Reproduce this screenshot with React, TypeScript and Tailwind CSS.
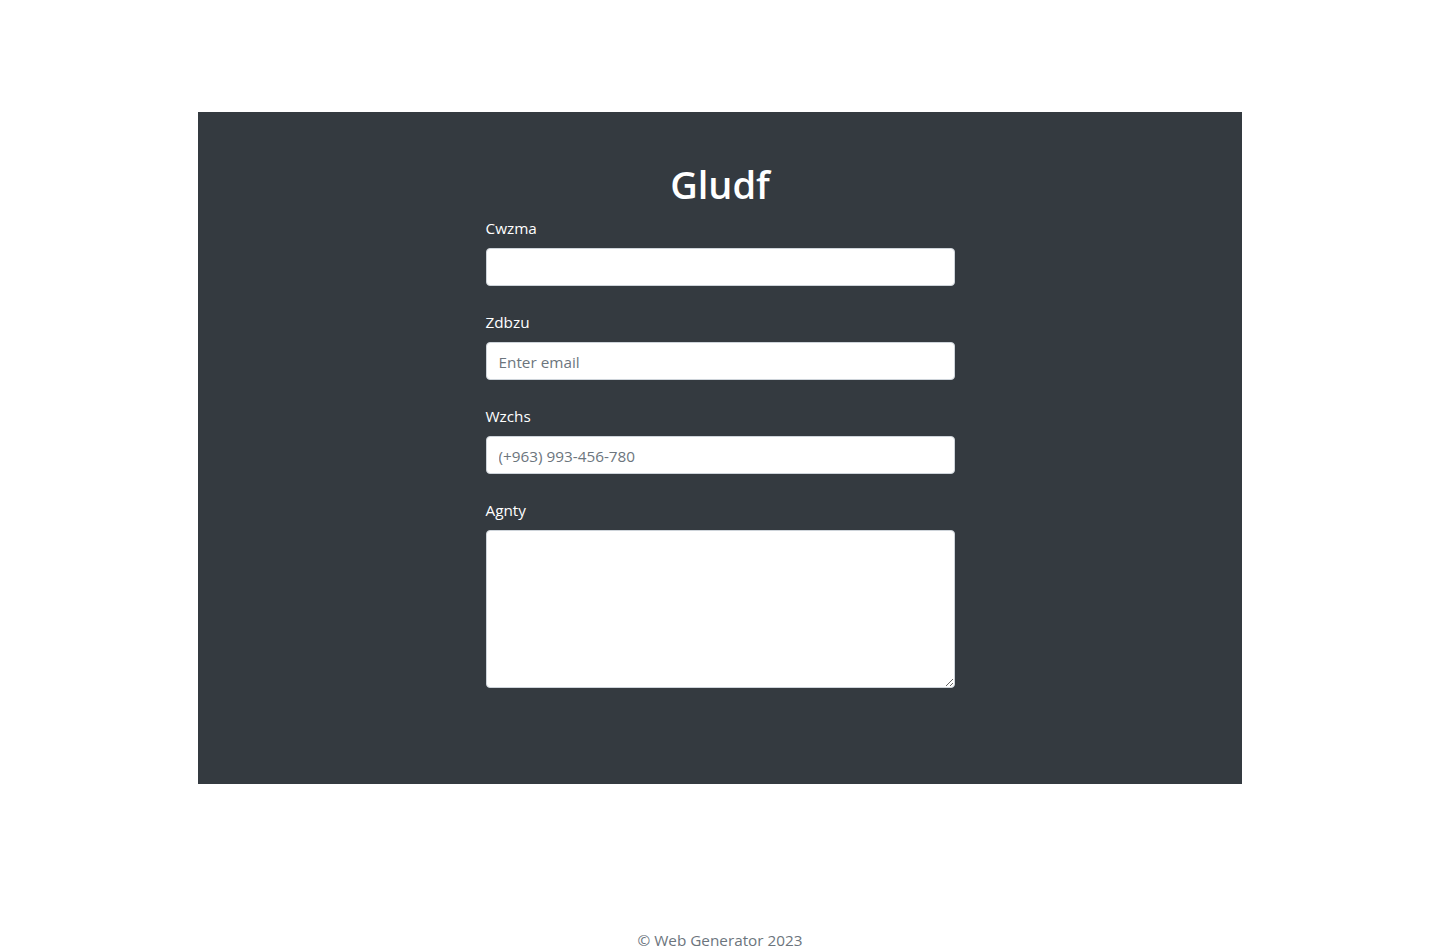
import React from 'react';

function Field({ label, children }: { label: string; children: React.ReactNode }) {
  return (
    <div className="mb-6 flex flex-col">
      <label className="mb-2 text-[15.3px] leading-6 text-white">{label}</label>
      {children}
    </div>
  );
}

const inputCls =
  'h-[38px] w-full rounded-[4px] border border-[#ced4da] bg-white px-3 pt-px text-[15.3px] text-[#212529] placeholder:text-[#6c757d] outline-none';

export default function App() {
  return (
    <div className="flex min-h-[952px] flex-col items-center bg-white font-['Open_Sans',sans-serif]">
      {/* Dark form panel */}
      <section className="mt-[112px] w-[1044px] bg-[#343a40] pt-12 pb-[72px]">
        <div className="mx-auto w-[469px]">
          <h1 className="mb-2 text-center text-[38px] font-semibold leading-[48px] text-white">Gludf</h1>
          <Field label="Cwzma">
            <input type="text" className={inputCls} />
          </Field>
          <Field label="Zdbzu">
            <input type="email" placeholder="Enter email" className={inputCls} />
          </Field>
          <Field label="Wzchs">
            <input type="tel" placeholder="(+963) 993-456-780" className={inputCls} />
          </Field>
          <Field label="Agnty">
            <textarea className="block h-[158px] w-full rounded-[4px] border border-[#ced4da] bg-white px-3 py-1.5 text-[15.3px] text-[#212529] outline-none" />
          </Field>
        </div>
      </section>

      {/* Footer */}
      <footer className="mt-[144px] text-center text-[15.3px] leading-6 text-[#6c757d]">© Web Generator 2023</footer>
    </div>
  );
}
